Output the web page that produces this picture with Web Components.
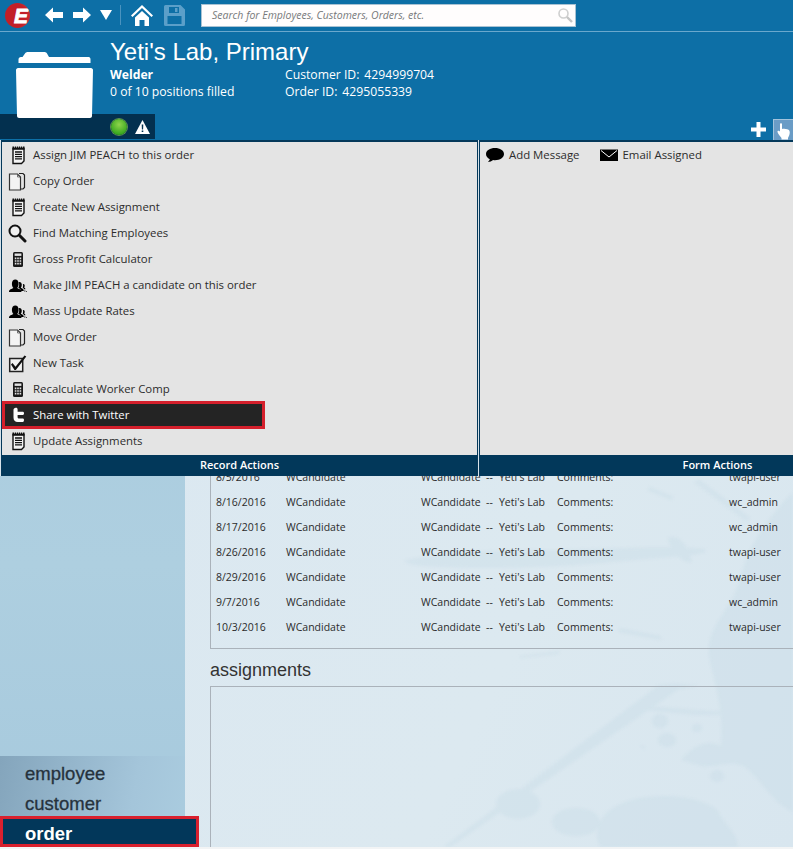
<!DOCTYPE html>
<html>
<head>
<meta charset="utf-8">
<title>Order</title>
<style>
  html, body { margin: 0; padding: 0; }
  body { width: 793px; height: 849px; overflow: hidden; background: #f2f4f5; font-family: "Open Sans", sans-serif; }
</style>
</head>
<body>
<app-shell>
  <top-bar slot="top"></top-bar>
  <record-header slot="header" title="Yeti's Lab, Primary" job="Welder" filled="0 of 10 positions filled" customer="4294999704" order="4295055339"></record-header>
  <side-nav slot="side">
    <nav-item>employee</nav-item>
    <nav-item>customer</nav-item>
    <nav-item active>order</nav-item>
  </side-nav>
  <content-pane slot="content">
    <feed-row date="8/5/2016" user="twapi-user"></feed-row>
    <feed-row date="8/16/2016" user="wc_admin"></feed-row>
    <feed-row date="8/17/2016" user="wc_admin"></feed-row>
    <feed-row date="8/26/2016" user="twapi-user"></feed-row>
    <feed-row date="8/29/2016" user="twapi-user"></feed-row>
    <feed-row date="9/7/2016" user="wc_admin"></feed-row>
    <feed-row date="10/3/2016" user="twapi-user"></feed-row>
  </content-pane>
  <action-menu slot="menu">
    <action-panel slot="record" label="Record Actions">
      <action-item icon="note">Assign JIM PEACH to this order</action-item>
      <action-item icon="copy">Copy Order</action-item>
      <action-item icon="note">Create New Assignment</action-item>
      <action-item icon="search">Find Matching Employees</action-item>
      <action-item icon="calc">Gross Profit Calculator</action-item>
      <action-item icon="people">Make JIM PEACH a candidate on this order</action-item>
      <action-item icon="people">Mass Update Rates</action-item>
      <action-item icon="copy">Move Order</action-item>
      <action-item icon="check">New Task</action-item>
      <action-item icon="calc">Recalculate Worker Comp</action-item>
      <action-item icon="twitter" active>Share with Twitter</action-item>
      <action-item icon="note">Update Assignments</action-item>
    </action-panel>
    <action-panel slot="form" label="Form Actions" inline>
      <action-item icon="bubble" compact>Add Message</action-item>
      <action-item icon="mail" compact>Email Assigned</action-item>
    </action-panel>
  </action-menu>
</app-shell>

<script>
// all icons used by the page, drawn on a 20x20 box
const ICONS = {
  note: '<path d="M6 3.500h11v12.500l-2.500 2.500H6z" fill="#f4f4f4" stroke="#111" stroke-width="1.400"/><path d="M5.500 1.500h12v3.200h-12z" fill="#111"/><path d="M7.500 1v1.600M9.500 1v1.600M11.500 1v1.600M13.500 1v1.600M15.500 1v1.600" stroke="#e4e4e4" stroke-width=".8"/><path d="M8 7h7M8 9.300h7M8 11.600h7M8 13.900h7" stroke="#111" stroke-width="1.300"/>',
  copy: '<path d="M12 2.500h4l1.500 1.500v12.500l-1.500 1.500h-2" fill="none" stroke="#222" stroke-width="1.200"/><path d="M2.500 3h8l3 3v13h-11z" fill="#f3f3f3" stroke="#333" stroke-width="1.200"/><path d="M10.500 3v3h3" fill="none" stroke="#555" stroke-width=".8"/>',
  search: '<circle cx="8" cy="8" r="5.500" fill="#f0f0f0" stroke="#111" stroke-width="2"/><path d="M12.300 12.300l5.700 5.700" stroke="#111" stroke-width="3" stroke-linecap="round"/>',
  calc: '<rect x="6" y="3" width="10" height="15" rx="1.500" fill="#1a1a1a"/><rect x="7.600" y="4.500" width="6.800" height="2.400" fill="#e4e4e4"/><path d="M7.800 8.600h1.600v1.600H7.800zM10.200 8.600h1.600v1.600h-1.600zM12.600 8.600h1.600v1.600h-1.600zM7.800 11.200h1.600v1.600H7.800zM10.200 11.200h1.600v1.600h-1.600zM12.600 11.200h1.600v1.600h-1.600zM7.800 13.800h1.600v1.600H7.800zM10.200 13.800h1.600v1.600h-1.600zM12.600 13.800h1.600v1.600h-1.600z" fill="#e4e4e4"/>',
  people: '<path d="M2 17c0-2.800 2.800-3 4.400-4-.9-1-1.500-2.400-1.500-4.200C4.900 6 6.300 4.500 8.300 4.500s3.300 1.500 3.300 4.300c0 1.800-.6 3.200-1.500 4.200 1.600 1 4.400 1.200 4.400 4z" fill="#000"/><path d="M12.400 7c1.500 0 2.400 1.100 2.400 2.800 0 1.200-.4 2.200-1 2.900 1.300.6 2.800.9 3 3.300h-2.600c-.4-1.700-1.700-2.700-2.900-3.300.6-.9.900-1.900.9-3 0-1-.2-1.900-.7-2.500z" fill="#000"/><path d="M16.300 9c.9 0 1.400.7 1.400 1.800 0 .7-.2 1.300-.6 1.700.7.300 1.200.8 1.400 1.700h-1.500c-.2-.8-.7-1.400-1.300-1.800.3-.6.400-1.200.4-1.800 0-.6-.1-1.100-.3-1.500z" fill="#000"/><path d="M17.300 15.400h1.100v1.100h-1.100zM19 15.900h.9v.9H19z" fill="#000"/>',
  check: '<rect x="2.700" y="5.500" width="13" height="13" fill="#f3f3f3" stroke="#222" stroke-width="1.500"/><path d="M5.500 10l3 3.700L17.500 2.500l1.800 1L8.800 17H7.500L4 11.500z" fill="#111"/>',
  twitter: '<path d="M8 3c1.600-.5 2.600 0 2.600 1.600v2.200h5.400c1.300 0 1.500 2.900 0 3.200h-5.400v2c0 1.100.6 1.500 1.800 1.500h3.600c1.400 0 1.300 3.500-.2 3.500h-5C8 17 6.500 15.300 6.500 12.500V5c0-1 .6-1.700 1.500-2z" fill="#fff"/>',
  bubble: '<path d="M10 3C5 3 1 5.400 1 9c0 2.300 1.500 4.200 3.800 5.200-.2 1.200-1.200 2-2 2.800 2 0 4-.8 5.300-2 .7.100 1.300.2 1.900.2 5 0 9-2.600 9-6.200S15 3 10 3z" fill="#000"/>',
  mail: '<path d="M1 4.500h18v11.500H1z" fill="#000"/><path d="M2 5.500l8 6.500 8-6.500" fill="none" stroke="#fff" stroke-width="1"/>'
};

class AppShell extends HTMLElement {
  constructor() {
    super();
    this.attachShadow({ mode: "open" });
    this.shadowRoot.innerHTML = `
      <style>
        :host { display: grid; position: relative; width: 793px; height: 847px; overflow: hidden;
          grid-template-rows: 32px 108px 1fr; grid-template-columns: 185px 1fr; }
        .top, .header { grid-column: 1 / 3; }
        .main { grid-column: 1 / 3; display: grid; grid-template-columns: 185px 1fr; position: relative; min-height: 0; }
        .menu { position: absolute; left: 0; top: 140px; z-index: 5; }
      </style>
      <div class="top"><slot name="top"></slot></div>
      <div class="header"><slot name="header"></slot></div>
      <div class="main"><slot name="side"></slot><slot name="content"></slot></div>
      <div class="menu"><slot name="menu"></slot></div>
    `;
  }
}

class TopBar extends HTMLElement {
  constructor() {
    super();
    this.attachShadow({ mode: "open" });
    this.shadowRoot.innerHTML = `
      <style>
        :host { display: flex; align-items: center; box-sizing: border-box; height: 32px; padding-bottom: 1px;
          background: #0d6fa6; border-bottom: 1px solid #6aa8cd; }
        svg { display: block; flex: none; }
        .logo { position: relative; width: 25px; height: 25px; margin: 0 0 0 5px; flex: none; border-radius: 50%; overflow: hidden;
          background: radial-gradient(circle at 30% 50%, #c21f27 60%, #d03a40); }
        .logo span { position: absolute; left: 9px; top: -2px; color: #fff; font: italic 900 21px/29px "Liberation Sans", sans-serif; -webkit-text-stroke: .8px #fff; }
        .sep { width: 1px; height: 20px; background: #4a93bf; margin: 0 10px 0 8px; flex: none; }
        .search { box-sizing: border-box; display: flex; align-items: center; justify-content: space-between;
          width: 375px; height: 23px; margin-left: 16px; padding: 0 2px 0 10px; background: #fffdfd; border: 1px solid #a9c2d3;
          color: #77797b; font: italic 10.500px "Open Sans", sans-serif; }
      </style>
      <div class="logo"><span>E</span></div>
      <svg style="margin-left:15px" width="18" height="16" viewBox="0 0 18 16"><path d="M0 8l8-7.500V5h10v6H8v4.500z" fill="#fff"/></svg>
      <svg style="margin-left:10px" width="18" height="16" viewBox="0 0 18 16"><path d="M18 8l-8-7.500V5H0v6h10v4.500z" fill="#fff"/></svg>
      <svg style="margin-left:9px" width="12" height="10" viewBox="0 0 12 10"><path d="M0 0h12l-6 10z" fill="#fff"/></svg>
      <div class="sep"></div>
      <svg width="22" height="21" viewBox="0 0 22 21"><path d="M11 0L0 10.500l1.500 1.500L11 3l9.500 9 1.500-1.500z M4 12.500L11 6l7 6.500V21h-4.500v-6h-5v6H4z" fill="#fff"/></svg>
      <svg style="margin-left:11px" width="21" height="21" viewBox="0 0 21 21"><path d="M1.500 0h15L21 4.500V19.500a1.500 1.500 0 0 1-1.500 1.500h-18A1.500 1.500 0 0 1 0 19.500v-18A1.500 1.500 0 0 1 1.500 0zM5 2v6h10V2zM3.500 11v8h14v-8z" fill="#5b9fc9" fill-rule="evenodd"/><path d="M11 3h2.500v4H11z" fill="#5b9fc9"/></svg>
      <div class="search">
        <span>Search for Employees, Customers, Orders, etc.</span>
        <svg width="16" height="16" viewBox="0 0 16 16"><circle cx="6.500" cy="6.500" r="4.500" fill="none" stroke="#cfcfcf" stroke-width="1.600"/><path d="M10 10l5 5" stroke="#c4c4c4" stroke-width="2.400"/></svg>
      </div>
    `;
  }
}

class RecordHeader extends HTMLElement {
  constructor() {
    super();
    this.attachShadow({ mode: "open" });
  }

  connectedCallback() {
    this.shadowRoot.innerHTML = `
      <style>
        :host { display: block; position: relative; box-sizing: border-box; height: 108px; background: #0d6fa6; color: #fff;
          font: 12.200px/17px "Open Sans", sans-serif; }
        .info { display: grid; grid-template-columns: 175px auto; align-content: start; padding: 5px 0 0 110px; height: 82px; box-sizing: border-box; }
        h1 { grid-column: 1 / 3; margin: 0; font: 24px/29px "Liberation Sans", sans-serif; }
        b { font-weight: 700; }
        .id span { margin-left: 5px; }
        .status { display: flex; align-items: center; justify-content: flex-end; box-sizing: border-box; width: 155px; height: 25px;
          padding-right: 5px; gap: 8px; background: #03304f; }
        .dot { width: 16px; height: 16px; border-radius: 50%; background: radial-gradient(circle at 50% 35%, #8fd44c, #35a51c 75%); box-shadow: 0 0 0 1px #5f8c55; }
        .folder { position: absolute; left: 16px; top: 20px; z-index: 1; }
        .tools { position: absolute; right: 0; bottom: 0; display: flex; align-items: flex-end; gap: 7px; }
        .hand { width: 20px; height: 21px; box-sizing: border-box; background: #6a9cc6; border: 1px solid #a2c3dc; border-bottom: none; border-right: none; }
        .hand svg { display: block; margin: 3px 0 0 3px; }
        .plus { margin-bottom: 3px; }
      </style>
      <div class="info">
        <h1>${this.getAttribute("title")}</h1>
        <b>${this.getAttribute("job")}</b>
        <div class="id">Customer ID:<span>${this.getAttribute("customer")}</span></div>
        <div>${this.getAttribute("filled")}</div>
        <div class="id">Order ID:<span>${this.getAttribute("order")}</span></div>
      </div>
      <div class="status">
        <div class="dot"></div>
        <svg width="15" height="14" viewBox="0 0 15 14"><path d="M7.500 0L15 14H0z" fill="#fff"/><path d="M6.700 4.500h1.600l-.2 5h-1.200zM6.700 10.500h1.600v1.600H6.700z" fill="#03304f"/></svg>
      </div>
      <svg class="folder" width="77" height="66" viewBox="0 0 77 66"><path d="M2.500 11V7.500C2.500 6 3.500 5 5 5h1.500L9 1.500C9.700.5 10.500 0 12 0h16c1.500 0 2.500.5 3 1.500L33 5h39.500c1.500 0 2 1 2 2.500V11z" fill="#fff"/><path d="M0 18c0-1 1-2 2-2h73c1 0 2 1 2 2l-1 46c0 1-1 2-2 2H3c-1 0-2-1-2-2z" fill="#fff"/></svg>
      <div class="tools">
        <svg class="plus" width="15" height="15" viewBox="0 0 15 15"><path d="M5.500 0h4v5.500H15v4H9.500V15h-4V9.500H0v-4h5.500z" fill="#fff"/></svg>
        <div class="hand"><svg width="13" height="17" viewBox="0 0 13 17"><path d="M3 1.200c0-1.400 2-1.400 2 0V6c2-.8 6.500 0 7.300 1.500 1 2 .2 5-1.300 7.500v1.500H4.500V15C3 13 1 11 .5 9c-.3-1.200 1.200-1.800 2.500-.5z" fill="#fff"/></svg></div>
      </div>
    `;
  }
}

class SideNav extends HTMLElement {
  constructor() {
    super();
    this.attachShadow({ mode: "open" });
    this.shadowRoot.innerHTML = `
      <style>
        :host { display: flex; flex-direction: column; justify-content: flex-end; position: relative; z-index: 2; min-height: 0;
          background: linear-gradient(180deg, #a7cade, #aecfe0 60%, #a6c9dd); }
        .list { background: linear-gradient(100deg, #84a5bc 0%, #a4c5da 70%, #aaccdf 100%); padding-top: 3px; }
      </style>
      <div class="list"><slot></slot></div>
    `;
  }
}

class NavItem extends HTMLElement {
  constructor() {
    super();
    this.attachShadow({ mode: "open" });
    this.shadowRoot.innerHTML = `
      <style>
        :host { display: block; box-sizing: border-box; height: 30px; padding-left: 25px; color: #26323c;
          font: 18.500px/30px "Liberation Sans", sans-serif; -webkit-text-stroke: .3px #26323c; }
        :host([active]) { position: relative; width: 199px; height: 31px; margin-top: -3px; padding-left: 22px; background: #02375a; border: 3px solid #d9202e; color: #fff;
          font-weight: 700; line-height: 30px; -webkit-text-stroke: 0; }
      </style>
      <slot></slot>
    `;
  }
}

class ContentPane extends HTMLElement {
  constructor() {
    super();
    this.attachShadow({ mode: "open" });
    this.shadowRoot.innerHTML = `
      <style>
        :host { display: block; position: relative; overflow: hidden; padding: 325px 0 0 25px; min-height: 0;
          background: linear-gradient(115deg, #dbe8f1, #dce9f0 60%, #d8e6ef); }
        .splash { position: absolute; left: 0; top: 0; filter: blur(1.500px); }
        .feed { position: relative; box-sizing: border-box; height: 184px; border: 1px solid #aab2ba; border-width: 0 0 1px 1px; }
        h2 { position: relative; margin: 11px 0 5px; height: 21px; color: #333; font: 400 18px/21px "Liberation Sans", sans-serif; }
        .box { position: relative; height: 170px; border: 1px solid #aab2ba; border-right: none; border-bottom: none; }
      </style>
      <svg class="splash" width="608" height="707" viewBox="185 140 608 707">
        <g fill="#bcd4e3" opacity=".24">
          <path d="M406 560c40-8 90-10 160-10 50-2 100-4 138-1 12 6-40 8-90 13-60 6-140 8-190 4-14-1-22-4-18-6z"/>
          <path d="M700 480l50 38-4 3-52-39zM650 487l24 10-3 3-24-10z"/>
          <path d="M668 538c10-4 20 6 24 24-8 2-22-10-24-24z"/>
          <path d="M793 492c-30 30-46 60-52 84-10 40-40 50-30 90 8 30 12 50 10 80-16-8-30 2-40 14l20 6c20 2 34-10 50 6 14 14 22 30 42 40z"/>
          <ellipse cx="660" cy="721" rx="8" ry="7"/><ellipse cx="667" cy="740" rx="9" ry="7"/><ellipse cx="697" cy="728" rx="5" ry="4"/>
          <ellipse cx="754" cy="733" rx="21" ry="16"/><ellipse cx="717" cy="776" rx="7" ry="6"/>
          <ellipse cx="518" cy="804" rx="22" ry="15"/><ellipse cx="576" cy="822" rx="24" ry="14"/>
          <path d="M600 847c-10-24 8-46 48-50 30-4 60 4 70 14 6 14 20 22 20 36z"/>
          <path d="M445 846l2 3 232-160 20-3-20-2-20 1z"/>
          <path d="M635 705l62 5 60 4-62 1-60-6z"/>
          <path d="M620 628l40 8 2 4-44-8zM520 656l40-5-2 3-38 4zM640 745l6 2-3 2z"/>
        </g>
      </svg>
      <div class="feed"><slot></slot></div>
      <h2>assignments</h2>
      <div class="box"></div>
    `;
  }
}

class FeedRow extends HTMLElement {
  constructor() {
    super();
    this.attachShadow({ mode: "open" });
  }

  connectedCallback() {
    this.shadowRoot.innerHTML = `
      <style>
        :host { display: grid; grid-template-columns: 70px 135px 78px 58px 172px auto; height: 25px; padding-left: 5px; color: #2b2b2b;
          font: 10.500px/25px "Open Sans", sans-serif; white-space: pre; }
      </style>
      <span>${this.getAttribute("date")}</span>
      <span>WCandidate</span>
      <span>WCandidate  --</span>
      <span>Yeti's Lab</span>
      <span>Comments:</span>
      <span>${this.getAttribute("user")}</span>
    `;
  }
}

class ActionMenu extends HTMLElement {
  constructor() {
    super();
    this.attachShadow({ mode: "open" });
    this.shadowRoot.innerHTML = `
      <style>
        :host { display: flex; width: 793px; height: 336px; overflow: hidden; box-sizing: border-box; gap: 1px; background: #d6e2ea; padding-left: 1px; }
      </style>
      <slot name="record"></slot>
      <slot name="form"></slot>
    `;
  }
}

class ActionPanel extends HTMLElement {
  constructor() {
    super();
    this.attachShadow({ mode: "open" });
  }

  connectedCallback() {
    const inline = this.hasAttribute("inline");
    this.shadowRoot.innerHTML = `
      <style>
        :host { display: flex; flex-direction: column; box-sizing: border-box; flex: none; width: 477px; height: 336px;
          background: #e4e4e4; border: 1px solid #04385a; border-top: 2px solid #04385a; }
        .items { flex: 1; display: flex; flex-direction: ${inline ? "row" : "column"}; align-items: flex-start; gap: ${inline ? "14px" : "0"}; }
        .foot { height: 20px; background: #02385a; color: #fff; text-align: center; font: 600 11px/20px "Open Sans", sans-serif; }
      </style>
      <div class="items"><slot></slot></div>
      <div class="foot">${this.getAttribute("label")}</div>
    `;
  }
}

class ActionItem extends HTMLElement {
  constructor() {
    super();
    this.attachShadow({ mode: "open" });
  }

  connectedCallback() {
    const icon = ICONS[this.getAttribute("icon")] || "";
    this.shadowRoot.innerHTML = `
      <style>
        :host { display: flex; align-items: center; gap: 6px; box-sizing: border-box; width: 263px; height: 26px; padding-left: 5px;
          color: #2c2c2c; font: 11.400px/26px "Open Sans", sans-serif; white-space: nowrap; }
        :host([compact]) { width: auto; gap: 4px; }
        :host([active]) { position: relative; height: 28px; margin: -1px 0; background: #242424; color: #fff; outline: 3px solid #d5202c; outline-offset: -3px; }
        svg { flex: none; display: block; }
      </style>
      <svg width="20" height="20" viewBox="0 0 20 20">${icon}</svg>
      <span><slot></slot></span>
    `;
  }
}

customElements.define("app-shell", AppShell);
customElements.define("top-bar", TopBar);
customElements.define("record-header", RecordHeader);
customElements.define("side-nav", SideNav);
customElements.define("nav-item", NavItem);
customElements.define("content-pane", ContentPane);
customElements.define("feed-row", FeedRow);
customElements.define("action-menu", ActionMenu);
customElements.define("action-panel", ActionPanel);
customElements.define("action-item", ActionItem);
</script>
</body>
</html>
